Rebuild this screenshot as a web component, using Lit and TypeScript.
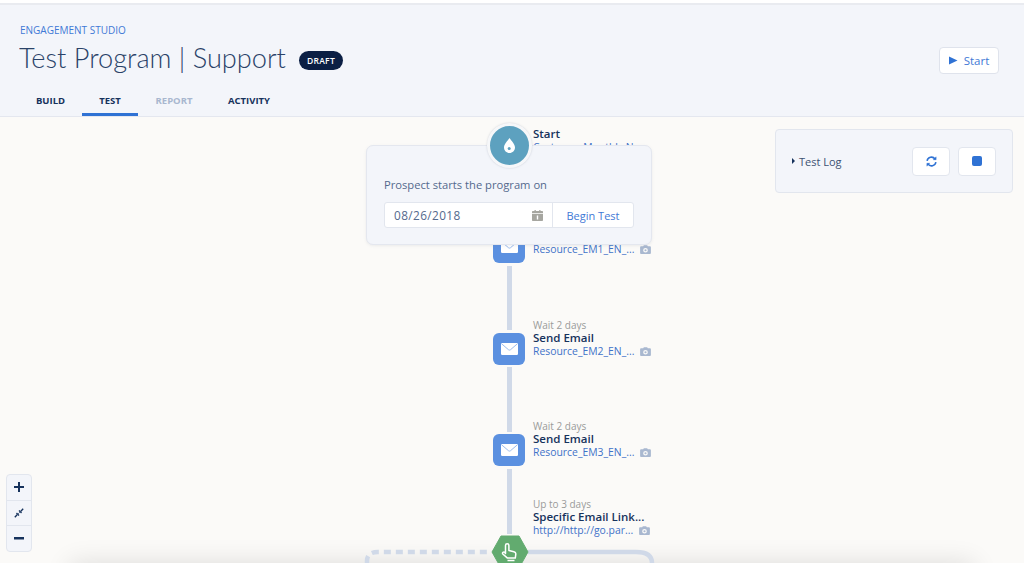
import { LitElement, html, css, svg } from "lit";
import { customElement } from "lit/decorators.js";

const mail = svg`<svg viewBox="0 0 17 12" width="17" height="12"><rect width="17" height="12" rx="1.200" fill="#fff"/><path d="M.6.8 7.600 6.800c.5.400 1.300.400 1.800 0L16.400.8" fill="none" stroke="#8fb3ea" stroke-width=".9"/></svg>`;
const cam = svg`<svg viewBox="0 0 12 10" width="11" height="9"><path fill-rule="evenodd" d="M1 1.500h2.400L4.200.2h3.600l.8 1.300H11c.6 0 1 .4 1 1V9c0 .6-.4 1-1 1H1c-.6 0-1-.4-1-1V2.500c0-.6.4-1 1-1zM6 8.400a2.600 2.600 0 1 0 0-5.200 2.600 2.600 0 0 0 0 5.200zM6 7a1.200 1.200 0 1 1 0-2.400A1.200 1.200 0 0 1 6 7z" fill="#a9b8d0"/></svg>`;

@customElement("app-root")
export class AppRoot extends LitElement {
  static styles = css`
    :host { display: block; width: 1024px; height: 563px; overflow: hidden; position: relative; background: #fbfaf8;
      font-family: "Open Sans", "Noto Sans", sans-serif; color: #16325c; }
    .topstrip { height: 5px; background: #fff; border-bottom: 2px solid #e9ebf0; box-sizing: border-box; }
    header { height: 112px; box-sizing: border-box; background: #f3f5fa; border-bottom: 1px solid #e4e7ef; padding: 18px 25px 0 19px; display: flex; flex-direction: column; }
    .crumb { font-size: 10px; line-height: 14px; color: #3f79d6; padding-left: 1px; }
    .titlerow { display: flex; align-items: center; margin-top: 1px; height: 40px; }
    h1 { margin: 0; font-family: "Lato", sans-serif; font-size: 27.200px; font-weight: 300; color: #2a4268; line-height: 40px; opacity: .999; }
    .badge { margin-left: 13px; margin-top: 4px; background: #0b1f44; color: #fff; font-size: 8.500px; font-weight: 600; letter-spacing: .3px; height: 19px; width: 44px; border-radius: 10px; display: flex; align-items: center; justify-content: center; }
    .start { margin-left: auto; width: 60px; height: 27px; box-sizing: border-box; background: #fff; border: 1px solid #dfe3ec; border-radius: 4px; display: flex; align-items: center; justify-content: center; gap: 6px; color: #3f79d6; font-family: inherit; font-size: 11.500px; margin-top: 5px; padding: 0; }
    .tabs { display: flex; margin-top: 15px; height: 23px; }
    .tab { font-size: 9.500px; font-weight: 700; color: #16325c; line-height: 16px; text-align: center; box-sizing: border-box; height: 23px; }
    .tab.on { border-bottom: 3px solid #2f72d4; }
    .tab.off { color: #a8b7cf; }
    .canvas { position: relative; height: 446px; background: #fbfaf8; overflow: hidden; }
    .line { position: absolute; background: #d0d9e8; width: 5px; left: 507px; }
    .node { position: absolute; left: 493px; width: 32px; height: 32px; border-radius: 6px; background: #5b90e0; display: flex; align-items: center; justify-content: center; }
    .info { position: absolute; left: 533px; width: 130px; }
    .wait { font-size: 10px; line-height: 12px; height: 12px; color: #9a9a9a; white-space: nowrap; }
    .name { font-size: 11.500px; font-weight: 600; line-height: 13px; height: 13px; color: #16325c; white-space: nowrap; }
    .res { font-size: 10.400px; line-height: 14px; color: #3f72c8; white-space: nowrap; display: flex; align-items: center; gap: 6px; }
    .startinfo { position: absolute; left: 533px; top: 10px; }
    .startnode { position: absolute; left: 487px; top: 6px; width: 45px; height: 45px; box-sizing: border-box; border-radius: 50%; background: #5da1bf; border: 3px solid #f6f7f9; box-shadow: 0 0 2px rgba(120,130,150,.35); display: flex; align-items: center; justify-content: center; }
    .popover { position: absolute; left: 366px; top: 28px; width: 286px; height: 100px; box-sizing: border-box; background: #f3f5fa; border: 1px solid #e4e7ef; border-radius: 7px; box-shadow: 0 1px 3px rgba(120,130,150,.12); padding: 32px 17px 0; }
    .ptext { font-size: 11.200px; line-height: 14px; color: #54698d; white-space: nowrap; }
    .dategroup { display: flex; margin-top: 10px; height: 26px; box-sizing: border-box; background: #fff; border: 1px solid #e2e6ee; border-radius: 3px; width: 250px; }
    .dateinput { flex: 1; display: flex; align-items: center; justify-content: space-between; padding: 0 9px; font-size: 11.800px; color: #54698d; letter-spacing: .4px; }
    .begin { width: 80px; border-left: 1px solid #e2e6ee; display: flex; align-items: center; justify-content: center; color: #3f79d6; font-size: 11px; }
    .log { position: absolute; right: 11px; top: 12px; width: 238px; height: 64px; box-sizing: border-box; background: #f3f5fa; border: 1px solid #e2e6ee; border-radius: 4px; padding: 0 16px; display: flex; align-items: center; font-size: 11px; color: #3d5272; gap: 4px; }
    .caret { width: 0; height: 0; border-left: 3.500px solid #16325c; border-top: 3px solid transparent; border-bottom: 3px solid transparent; }
    .iconbtn { width: 38px; height: 29px; box-sizing: border-box; background: #fff; border: 1px solid #e2e6ee; border-radius: 4px; display: flex; align-items: center; justify-content: center; }
    .logbtns { margin-left: auto; display: flex; gap: 8px; }
    .stop { width: 10px; height: 10px; background: #2f72d4; border-radius: 2px; }
    .zoom { position: absolute; left: 6px; top: 357px; width: 26px; height: 78px; box-sizing: border-box; background: #f3f5fa; border: 1px solid #e2e6ee; border-radius: 4px; display: flex; flex-direction: column; }
    .zoom div { flex: 1; display: flex; align-items: center; justify-content: center; }
    .zoom div + div { border-top: 1px solid #e2e6ee; }
    .fade { position: absolute; left: 70px; right: 50px; bottom: -30px; height: 30px; background: #eee; box-shadow: 0 0 26px rgba(0,0,0,.12); }
    .branch { position: absolute; left: 340px; top: 420px; }
    .hex { position: absolute; left: 491px; top: 418px; }
  `;

  private emailNode(top: number, res: string, wait: string, name: string) {
    return html`
      <div class="node" style="top:${top}px">${mail}</div>
      <div class="info" style="top:${top - 14}px">
        <div class="wait">${wait}</div>
        <div class="name">${name}</div>
        <div class="res">${res}${cam}</div>
      </div>`;
  }

  render() {
    return html`
      <div class="topstrip"></div>
      <header>
        <div class="crumb">ENGAGEMENT STUDIO</div>
        <div class="titlerow">
          <h1>Test Program | Support</h1>
          <span class="badge">DRAFT</span>
          <button class="start">
            <svg width="9" height="9" viewBox="0 0 9 9"><path d="M0 .5 8.500 4.500 0 8.500z" fill="#2f72d4"/></svg>Start
          </button>
        </div>
        <nav class="tabs">
          <div class="tab" style="width:63px">BUILD</div>
          <div class="tab on" style="width:56px">TEST</div>
          <div class="tab off" style="width:72px">REPORT</div>
          <div class="tab" style="width:78px">ACTIVITY</div>
        </nav>
      </header>
      <div class="canvas">
        <div class="fade"></div>
        <div class="line" style="top:149px;height:64px"></div>
        <div class="line" style="top:250px;height:65px"></div>
        <div class="line" style="top:352px;height:65px"></div>

        ${this.emailNode(114, "Resource_EM1_EN_...", "", "")}
        ${this.emailNode(216, "Resource_EM2_EN_...", "Wait 2 days", "Send Email")}
        ${this.emailNode(317, "Resource_EM3_EN_...", "Wait 2 days", "Send Email")}

        <div class="info" style="top:381px">
          <div class="wait">Up to 3 days</div>
          <div class="name">Specific Email Link...</div>
          <div class="res">http://http://go.par...${cam}</div>
        </div>

        <svg class="branch" width="320" height="26" viewBox="0 0 320 26" fill="none">
          <path d="M27 26V24Q27 15 38 15H150" stroke="#d0d9e8" stroke-width="4.500" stroke-dasharray="7 5"/>
          <path d="M188 15H296Q312 15 312 26" stroke="#d0d9e8" stroke-width="4.500"/>
        </svg>
        <svg class="hex" width="38" height="34" viewBox="0 0 38 34">
          <path d="M10 1H28L37 17 28 33H10L1 17z" fill="#62ab6f" stroke="#62ab6f" stroke-linejoin="round"/>
          <path d="M14.500 18.500V10.500a1.700 1.700 0 0 1 3.400 0V15.500l5 1.200c1.300.3 2 1.200 1.900 2.400l-.5 4H16.500L11.800 19c-1-1.200.8-2.700 2-1.600z" fill="none" stroke="#fff" stroke-width="1.500" stroke-linejoin="round"/>
          <path d="M16.500 25.500H23.500" stroke="#fff" stroke-width="1.500"/>
        </svg>

        <div class="startinfo">
          <div class="name">Start</div>
          <div class="res">Customer Monthly N...</div>
        </div>

        <div class="popover">
          <div class="ptext">Prospect starts the program on</div>
          <div class="dategroup">
            <div class="dateinput">08/26/2018
              <svg width="11" height="11" viewBox="0 0 11 11"><path d="M0 4h11v6c0 .6-.4 1-1 1H1c-.6 0-1-.4-1-1zM1 1h1.500V0h1.300v1h3.400V0h1.300v1H10c.6 0 1 .4 1 1v1.200H0V2c0-.6.4-1 1-1z" fill="#a6a6a0"/><rect x="4.800" y="5.500" width="1.400" height="4" fill="#fff"/></svg>
            </div>
            <div class="begin">Begin Test</div>
          </div>
        </div>
        <div class="startnode">
          <svg width="11" height="15" viewBox="0 0 11 15"><path d="M5.500 0C7.300 2.800 11 6 11 9.500 11 12.500 8.500 15 5.500 15S0 12.500 0 9.500C0 6 3.700 2.800 5.500 0z" fill="#fff"/><circle cx="5.200" cy="10.500" r="1.500" fill="#5da1bf"/></svg>
        </div>

        <div class="log">
          <span class="caret"></span>Test Log
          <div class="logbtns">
            <div class="iconbtn">
              <svg width="11" height="11" viewBox="0 0 12 12" fill="none" stroke="#2f72d4" stroke-width="1.700"><path d="M1.200 5.200A4.800 4.800 0 0 1 9.800 3.200"/><path d="M10.800 6.800A4.800 4.800 0 0 1 2.200 8.800"/><path d="M11 .8v3.200H7.800M1 11.200V8h3.200" fill="#2f72d4" stroke-width=".6"/></svg>
            </div>
            <div class="iconbtn"><span class="stop"></span></div>
          </div>
        </div>

        <div class="zoom">
          <div><svg width="10" height="10" viewBox="0 0 10 10"><path d="M4 0h2v4h4v2H6v4H4V6H0V4h4z" fill="#16325c"/></svg></div>
          <div><svg width="10" height="10" viewBox="0 0 10 10"><path d="M.8 9.200 3.400 6.600M9.200.8 6.600 3.400" stroke="#16325c" stroke-width="1.400"/><path d="M4.500 5.500 2.200 5.200 4.800 7.800zM5.500 4.500 5.200 2.200 7.800 4.800z" fill="#16325c" stroke="#16325c" stroke-width=".6"/></svg></div>
          <div><svg width="10" height="3" viewBox="0 0 10 3"><rect width="10" height="2.500" fill="#16325c"/></svg></div>
        </div>
      </div>
    `;
  }
}
